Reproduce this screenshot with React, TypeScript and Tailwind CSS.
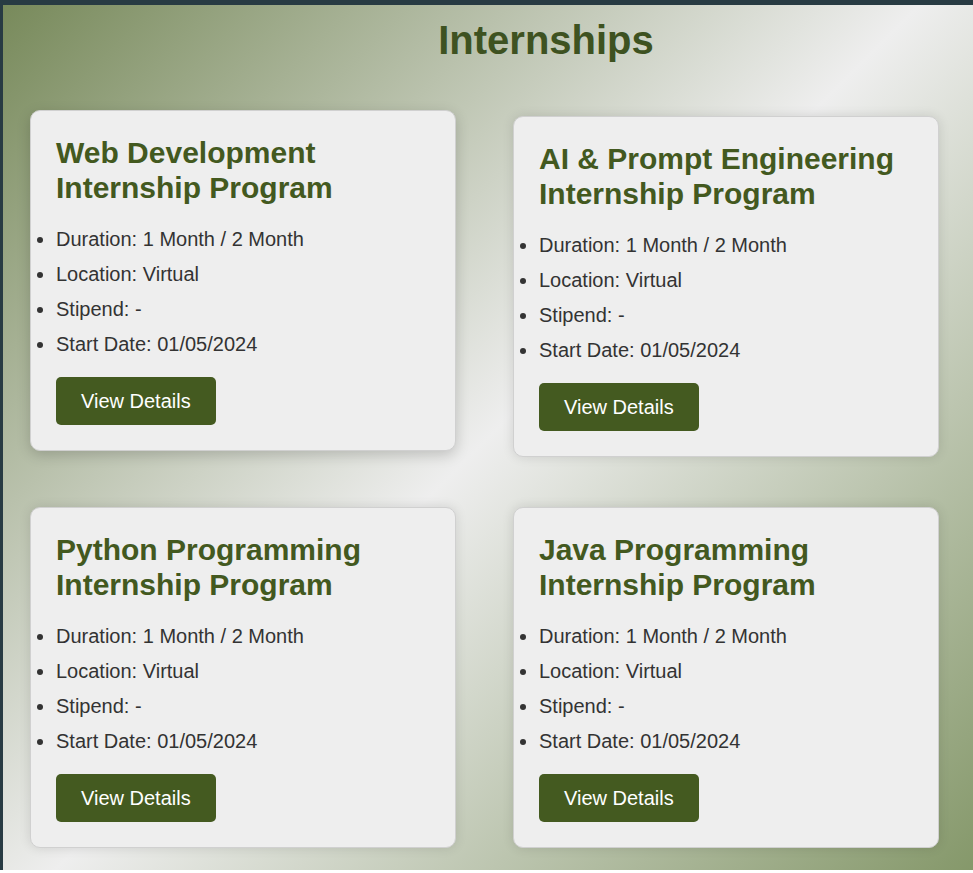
const internships = [
  { title: "Web Development Internship Program", lifted: true },
  { title: "AI & Prompt Engineering Internship Program", lifted: false },
  { title: "Python Programming Internship Program", lifted: false },
  { title: "Java Programming Internship Program", lifted: false },
];

function InternshipCard({ title, lifted }: { title: string; lifted: boolean }) {
  return (
    <div
      className={
        lifted
          ? "-translate-y-[6px] rounded-[10px] border border-[#d0d0d0] bg-[#eeeeee] p-[25px] shadow-[0_4px_14px_rgba(0,0,0,0.18)]"
          : "rounded-[10px] border border-[#d0d0d0] bg-[#eeeeee] p-[25px] shadow-[0_0_12px_rgba(0,0,0,0.12)]"
      }
    >
      <h2 className="mb-[23px] text-[30px] font-bold leading-[34.5px] text-[#43591f]">{title}</h2>
      <ul className="mb-[21px] list-disc text-[20px] leading-[23px] text-[#333333]">
        <li className="mb-[12px]">Duration: 1 Month / 2 Month</li>
        <li className="mb-[12px]">Location: Virtual</li>
        <li className="mb-[12px]">Stipend: -</li>
        <li className="mb-[12px]">Start Date: 01/05/2024</li>
      </ul>
      <button className="rounded-[5px] bg-[#445a20] px-[25px] py-[12.5px] text-[20px] leading-[23px] text-white">
        View Details
      </button>
    </div>
  );
}

export default function App() {
  return (
    <div className="font-['Liberation_Sans',Arial,sans-serif]">
      <div className="h-[870px] border-l-[3px] border-t-[5px] border-[#283b43] bg-[linear-gradient(135deg,#788a5b_0%,#eeeeee_50%,#85986a_100%)]">
        <h1 className="pl-[116px] pt-[12px] text-center text-[40px] font-bold leading-[46px] text-[#3e5221]">
          Internships
        </h1>
        <div className="mt-[53px] grid grid-cols-[426px_426px] gap-x-[57px] gap-y-[50px] pl-[27px]">
          {internships.map((item) => (
            <InternshipCard key={item.title} title={item.title} lifted={item.lifted} />
          ))}
        </div>
      </div>
    </div>
  );
}
